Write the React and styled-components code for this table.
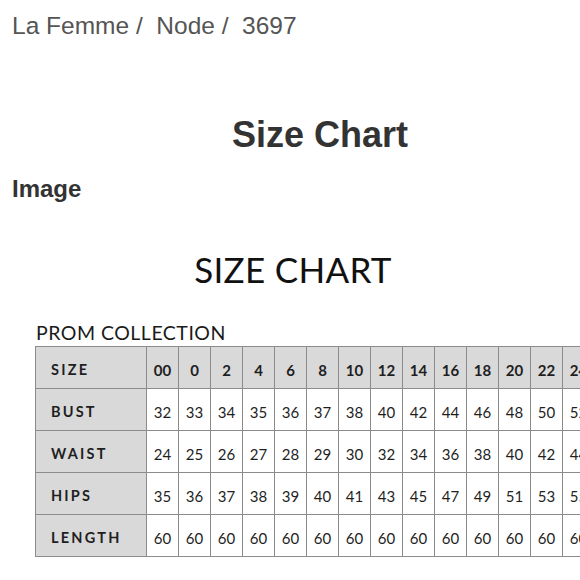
import React from "react";
import styled, { createGlobalStyle } from "styled-components";

const Global = createGlobalStyle`
  html, body { margin: 0; padding: 0; background: #ffffff; }
  body { width: 580px; height: 580px; overflow: hidden; }
`;

const Page = styled.div`
  width: 580px;
  height: 580px;
  overflow: hidden;
  font-family: "Liberation Sans", Arial, sans-serif;
  display: flex;
  flex-direction: column;
`;

const Breadcrumb = styled.div`
  padding: 12px 0 0 12px;
  font-size: 24.5px;
  line-height: 28px;
  color: #555555;
  white-space: pre;
`;

const Title = styled.h1`
  margin: 74px 0 0 0;
  padding-left: 60px;
  text-align: center;
  font-size: 36px;
  line-height: 42px;
  font-weight: 700;
  color: #333333;
`;

const FieldLabel = styled.div`
  margin-top: 19px;
  padding-left: 12px;
  font-size: 24px;
  line-height: 28px;
  font-weight: 700;
  color: #333333;
`;

const Chart = styled.div`
  margin-top: 44px;
  display: flex;
  flex-direction: column;
  font-family: "Lato", "DejaVu Sans", sans-serif;
  color: #1e1e1e;
`;

const ChartTitle = styled.div`
  text-align: center;
  padding-left: 6px;
  font-size: 35px;
  line-height: 44px;
  letter-spacing: 0.3px;
  font-weight: 400;
  color: #111111;
`;

const Collection = styled.div`
  margin-top: 31px;
  padding-left: 36px;
  font-size: 19.5px;
  line-height: 22px;
  letter-spacing: 0.5px;
  color: #1a1a1a;
`;

const Grid = styled.div`
  margin: 2px 0 0 35px;
  display: grid;
  grid-template-columns: 111px repeat(14, 32px);
  grid-auto-rows: 42px;
  width: max-content;
  border-top: 1px solid #8c8c8c;
  border-left: 1px solid #8c8c8c;
`;

const Cell = styled.div`
  display: flex;
  align-items: center;
  justify-content: ${(p) => (p.$label ? "flex-start" : "center")};
  padding: ${(p) => (p.$label ? "3px 0 0 15px" : "5px 0 0 0")};
  box-sizing: border-box;
  border-right: 1px solid #8c8c8c;
  border-bottom: 1px solid #8c8c8c;
  background: ${(p) => (p.$shaded ? "#d9d9d9" : "#ffffff")};
  font-size: ${(p) => (p.$label ? "14.5px" : "15px")};
  font-weight: ${(p) => (p.$bold ? 700 : 400)};
  letter-spacing: ${(p) => (p.$label ? "2.2px" : "0")};
  color: #1f1f1f;
`;

const sizes = ["00", "0", "2", "4", "6", "8", "10", "12", "14", "16", "18", "20", "22", "24"];
const rows = [
  ["BUST", ["32", "33", "34", "35", "36", "37", "38", "40", "42", "44", "46", "48", "50", "52"]],
  ["WAIST", ["24", "25", "26", "27", "28", "29", "30", "32", "34", "36", "38", "40", "42", "44"]],
  ["HIPS", ["35", "36", "37", "38", "39", "40", "41", "43", "45", "47", "49", "51", "53", "55"]],
  ["LENGTH", ["60", "60", "60", "60", "60", "60", "60", "60", "60", "60", "60", "60", "60", "60"]],
];

export default function App() {
  return (
    <>
      <Global />
      <Page>
        <Breadcrumb>{"La Femme /  Node /  3697"}</Breadcrumb>
        <Title>Size Chart</Title>
        <FieldLabel>Image</FieldLabel>
        <Chart>
          <ChartTitle>SIZE CHART</ChartTitle>
          <Collection>PROM COLLECTION</Collection>
          <Grid>
            <Cell $label $shaded $bold>SIZE</Cell>
            {sizes.map((s) => (
              <Cell key={s} $shaded $bold>{s}</Cell>
            ))}
            {rows.map(([label, vals]) => (
              <React.Fragment key={label}>
                <Cell $label $shaded $bold>{label}</Cell>
                {vals.map((v, i) => (
                  <Cell key={i}>{v}</Cell>
                ))}
              </React.Fragment>
            ))}
          </Grid>
        </Chart>
      </Page>
    </>
  );
}
